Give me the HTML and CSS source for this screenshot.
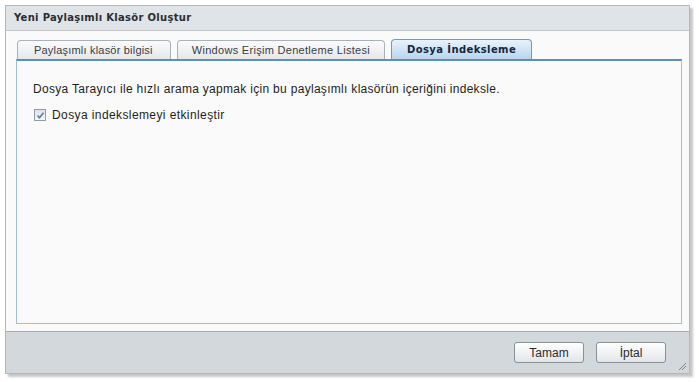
FILE: index.html
```html
<!DOCTYPE html>
<html lang="tr">
<head>
    <meta charset="UTF-8">
    <title>Yeni Paylaşımlı Klasör Oluştur</title>
    <link rel="stylesheet" href="styles.css">
</head>
<body>
    <div class="window">
        <div class="titlebar">Yeni Paylaşımlı Klasör Oluştur</div>

        <div class="window-body">
            <div class="tabs">
                <div class="tab">Paylaşımlı klasör bilgisi</div>
                <div class="tab tab-wide">Windows Erişim Denetleme Listesi</div>
                <div class="tab active">Dosya İndeksleme</div>
            </div>

            <div class="panel">
                <p class="desc">Dosya Tarayıcı ile hızlı arama yapmak için bu paylaşımlı klasörün içeriğini indeksle.</p>
                <label class="check-row">
                    <span class="checkbox">
                        <svg width="9" height="9" viewBox="0 0 9 9">
                            <path d="M1.5 4.5 L3.5 6.8 L7.5 1.8" fill="none" stroke="#5b7ba6" stroke-width="1.6"/>
                        </svg>
                    </span>
                    Dosya indekslemeyi etkinleştir
                </label>
            </div>
        </div>

        <div class="footer">
            <button class="btn">Tamam</button>
            <button class="btn">İptal</button>
            <svg class="grip" width="9" height="9" viewBox="0 0 9 9">
                <path d="M1 8 L8 1 M4 8 L8 4" stroke="#7d8287" stroke-width="1"/>
            </svg>
        </div>
    </div>
</body>
</html>
```

FILE: styles.css
```css
* {
    margin: 0;
    padding: 0;
    box-sizing: border-box;
}

body {
    font-family: Tahoma, "DejaVu Sans", sans-serif;
    background: #ffffff;
    width: 699px;
    height: 382px;
    overflow: hidden;
}

.window {
    margin: 5px 0 0 5px;
    width: 685px;
    height: 369px;
    border: 1px solid #b4b7ba;
    display: flex;
    flex-direction: column;
    box-shadow: 3px 3px 2px rgba(0, 0, 0, 0.22);
    position: relative;
}

.titlebar {
    height: 25px;
    background: #dfe4e8;
    border-bottom: 1px solid #c3c8cc;
    color: #2b2e31;
    font-family: "DejaVu Sans", sans-serif;
    font-weight: bold;
    font-size: 10px;
    letter-spacing: 0.3px;
    line-height: 24px;
    padding-left: 8px;
}

.window-body {
    flex: 1;
    background: #fafafa;
    padding: 8px 7px 7px 10px;
    display: flex;
    flex-direction: column;
}

.tabs {
    display: flex;
    align-items: flex-end;
    gap: 6px;
    padding-left: 1px;
    height: 20px;
}

.tab {
    height: 19px;
    padding: 0 17px 0 16px;
    border: 1px solid #aab2b9;
    border-bottom: none;
    border-radius: 4px 4px 0 0;
    background: linear-gradient(#fbfbfc, #e4e8eb);
    color: #3a3d40;
    font-family: "Liberation Sans", sans-serif;
    font-size: 11px;
    letter-spacing: 0.2px;
    line-height: 18px;
    white-space: nowrap;
}

.tab-wide {
    letter-spacing: 0.3px;
    padding: 0 14px;
}

.tab.active {
    height: 20px;
    padding: 0 15px;
    border-color: #6e9cc4;
    background: linear-gradient(#e9f3fb, #b8d5ee);
    color: #14273d;
    font-family: "DejaVu Sans", sans-serif;
    font-weight: bold;
    font-size: 10px;
    letter-spacing: 0.4px;
    line-height: 20px;
}

.panel {
    flex: 1;
    border: 1px solid #9ec0dd;
    border-top: 2px solid #5d8fbb;
    background: #fafafa;
    padding: 21px 16px;
}

.desc {
    font-family: "Liberation Sans", sans-serif;
    font-size: 12px;
    letter-spacing: 0.3px;
    color: #1e1f20;
    line-height: 15px;
}

.check-row {
    display: flex;
    align-items: center;
    gap: 6px;
    margin-top: 11px;
    margin-left: 1px;
    font-family: "Liberation Sans", sans-serif;
    font-size: 12px;
    color: #1e1f20;
    letter-spacing: 0.4px;
}

.checkbox {
    width: 12px;
    height: 12px;
    border: 1px solid #8f9ba8;
    background: linear-gradient(#dfe3e8, #f4f6f8);
    display: flex;
    align-items: center;
    justify-content: center;
}

.footer {
    height: 42px;
    background: #d3d8dc;
    border-top: 1px solid #a9adb1;
    display: flex;
    align-items: center;
    justify-content: flex-end;
    gap: 12px;
    padding-right: 23px;
    position: relative;
}

.btn {
    width: 70px;
    height: 21px;
    border: 1px solid #8b9095;
    border-radius: 3px;
    background: linear-gradient(#ffffff, #e2e5e8);
    font-family: "Liberation Sans", sans-serif;
    font-size: 12px;
    color: #2a2c2e;
}

.grip {
    position: absolute;
    right: 2px;
    bottom: 2px;
}
```
